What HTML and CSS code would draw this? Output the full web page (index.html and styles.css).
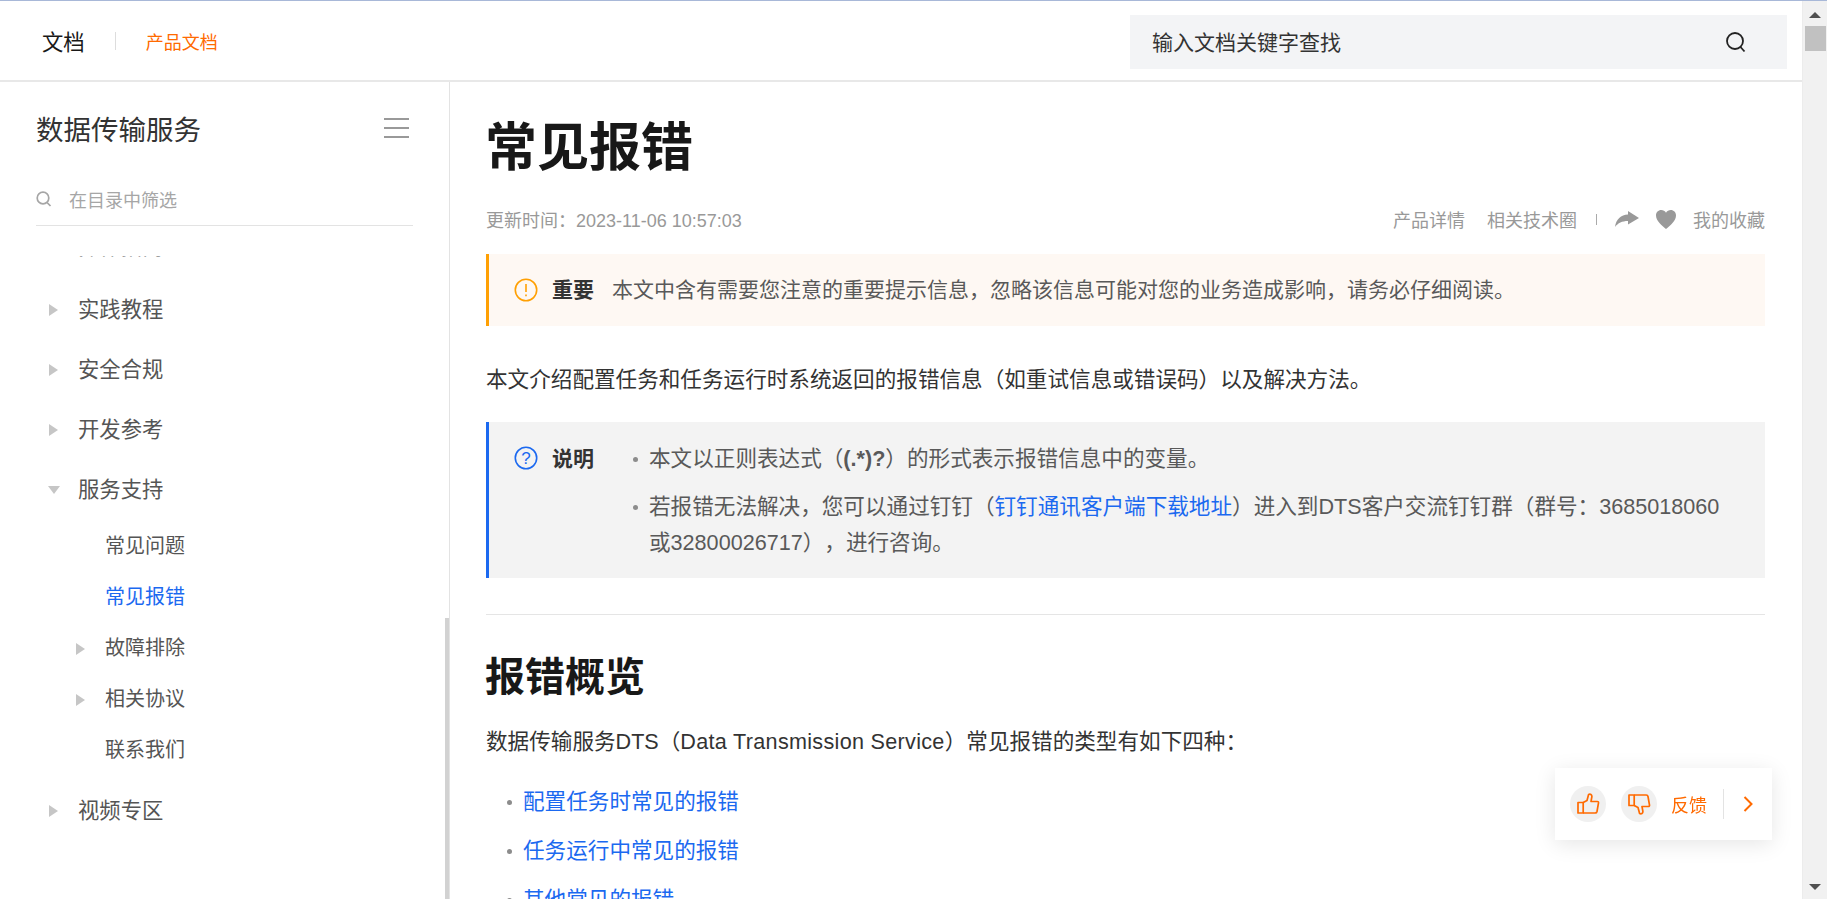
FILE: index.html
```html
<!DOCTYPE html>
<html lang="zh-CN">
<head>
    <meta charset="UTF-8">
    <meta name="viewport" content="width=device-width, initial-scale=1.0">
    <title>常见报错</title>
    <link rel="stylesheet" href="styles.css">
</head>
<body>
    <div class="page">
        <header class="topbar">
            <div class="crumbs">
                <span class="crumb-root">文档</span>
                <span class="crumb-sep"></span>
                <span class="crumb-link">产品文档</span>
            </div>
            <div class="search">
                <span>输入文档关键字查找</span>
                <svg class="search-icon" viewBox="0 0 22 22"><circle cx="10" cy="10" r="8" /><path d="M15.5 16l4 4.5" /></svg>
            </div>
        </header>

        <div class="columns">
            <aside class="sidebar">
                <div class="side-head">
                    <span class="side-title">数据传输服务</span>
                    <span class="burger"><i></i><i></i><i></i></span>
                </div>
                <div class="filter">
                    <svg class="filter-icon" viewBox="0 0 16 16"><circle cx="7" cy="7" r="5.8" /><path d="M11 11.5l3.5 3.5" /></svg>
                    <span>在目录中筛选</span>
                </div>
                <nav class="tree">
                    <div class="tree-inner">
                        <div class="node"><span class="arrow"></span>操作指南</div>
                        <div class="node"><span class="arrow"></span>实践教程</div>
                        <div class="node"><span class="arrow"></span>安全合规</div>
                        <div class="node"><span class="arrow"></span>开发参考</div>
                        <div class="node"><span class="arrow down"></span>服务支持</div>
                        <div class="subnodes">
                            <div class="sub">常见问题</div>
                            <div class="sub active">常见报错</div>
                            <div class="sub"><span class="arrow"></span>故障排除</div>
                            <div class="sub"><span class="arrow"></span>相关协议</div>
                            <div class="sub">联系我们</div>
                        </div>
                        <div class="node"><span class="arrow"></span>视频专区</div>
                    </div>
                </nav>
                <div class="side-scroll"></div>
            </aside>

            <main class="content">
                <h1>常见报错</h1>
                <div class="meta">
                    <span class="updated">更新时间：2023-11-06 10:57:03</span>
                    <div class="meta-links">
                        <span>产品详情</span>
                        <span>相关技术圈</span>
                        <span class="meta-sep"></span>
                        <svg class="share" viewBox="0 0 24 16"><path d="M13 0l11 7-11 6.500V10C7 10 3 12 0 16 1 8 6 3.800 13 3.400z" /></svg>
                        <svg class="heart" viewBox="0 0 20 19"><path d="M10 19C6 15.5 0 11 0 5.5 0 2.300 2.300 0 5.200 0 7.200 0 9 1 10 2.800 11 1 12.800 0 14.800 0 17.700 0 20 2.300 20 5.500 20 11 14 15.500 10 19z" /></svg>
                        <span class="fav">我的收藏</span>
                    </div>
                </div>

                <div class="notice important">
                    <svg class="notice-icon" viewBox="0 0 24 24"><circle cx="12" cy="12" r="10.700" /><path d="M12 6v8" /><path d="M12 16.500v1.800" /></svg>
                    <strong>重要</strong>
                    <span class="important-text">本文中含有需要您注意的重要提示信息，忽略该信息可能对您的业务造成影响，请务必仔细阅读。</span>
                </div>

                <p class="intro">本文介绍配置任务和任务运行时系统返回的报错信息（如重试信息或错误码）以及解决方法。</p>

                <div class="notice note">
                    <svg class="notice-icon" viewBox="0 0 24 24"><circle cx="12" cy="12" r="10.700" /><text x="12" y="18" text-anchor="middle">?</text></svg>
                    <strong>说明</strong>
                    <ul>
                        <li>本文以正则表达式（<b>(.*)?</b>）的形式表示报错信息中的变量。</li>
                        <li>若报错无法解决，您可以通过钉钉（<a href="#">钉钉通讯客户端下载地址</a>）进入到DTS客户交流钉钉群（群号：3685018060或32800026717），进行咨询。</li>
                    </ul>
                </div>

                <hr>

                <h2>报错概览</h2>
                <p class="lead">数据传输服务DTS（<span class="latin">Data Transmission Service</span>）常见报错的类型有如下四种：</p>
                <ul class="links">
                    <li><a href="#">配置任务时常见的报错</a></li>
                    <li><a href="#">任务运行中常见的报错</a></li>
                    <li><a href="#">其他常见的报错</a></li>
                </ul>
            </main>
        </div>

        <div class="feedback">
            <span class="vote"><svg viewBox="0 0 24 24"><path d="M2 10.500h5.200V21H2z" /><path d="M7.200 10.500L11 8.500l1.600-6c1.700-.9 3.400.2 3.300 2.100L15 9.500h6.300c.8 0 1.300.6 1.200 1.400L21 19.500c-.2 1-.9 1.500-1.800 1.500H7.200" /></svg></span>
            <span class="vote"><svg viewBox="0 0 24 24"><g transform="matrix(1 0 0 -1 0 24)"><path d="M2 10.500h5.200V21H2z" /><path d="M7.200 10.500L11 8.500l1.600-6c1.700-.9 3.400.2 3.300 2.100L15 9.500h6.300c.8 0 1.300.6 1.200 1.400L21 19.500c-.2 1-.9 1.500-1.800 1.500H7.200" /></g></svg></span>
            <span class="feedback-label">反馈</span>
            <span class="feedback-sep"></span>
            <svg class="feedback-more" viewBox="0 0 10 16"><path d="M1.500 1l7 7-7 7" /></svg>
        </div>
    </div>

    <div class="scrollbar">
        <span class="scroll-up"></span>
        <span class="scroll-thumb"></span>
        <span class="scroll-down"></span>
    </div>
</body>
</html>
```

FILE: styles.css
```css
* {
    box-sizing: border-box;
}
html, body {
    height: 100%;
}
body {
    margin: 0;
    display: flex;
    height: 899px;
    overflow: hidden;
    border-top: 1px solid #a8b8d8;
    background: #fff;
    color: #333;
    font-family: "Liberation Sans", "Noto Sans CJK SC", sans-serif;
    font-size: 21.33px;
    text-spacing-trim: space-all;
}
.page {
    flex: 1;
    min-width: 0;
    display: flex;
    flex-direction: column;
}

/* top bar */
.topbar {
    flex: none;
    height: 81px;
    display: flex;
    align-items: center;
    justify-content: space-between;
    padding: 0 15px 0 42px;
    border-bottom: 2px solid #e8e8e8;
}
.crumbs {
    display: flex;
    align-items: center;
}
.crumb-root {
    color: #181818;
}
.crumb-sep {
    width: 1px;
    height: 18px;
    margin: 0 30px;
    background: #ddd;
}
.crumb-link {
    font-size: 18px;
    color: #ff6a00;
}
.search {
    width: 657px;
    height: 54px;
    margin-top: 3px;
    display: flex;
    align-items: center;
    justify-content: space-between;
    padding: 0 40px 0 22px;
    background: #f3f4f6;
    font-size: 21px;
    color: #333;
}
.search span {
    margin-top: -3px;
}
.search-icon {
    width: 22px;
    height: 22px;
    fill: none;
    stroke: #222;
    stroke-width: 1.8;
}

/* columns */
.columns {
    flex: 1;
    min-height: 0;
    display: flex;
}
.sidebar {
    position: relative;
    flex: none;
    width: 450px;
    display: flex;
    flex-direction: column;
    padding: 0 36px;
    border-right: 1px solid #e3e3e3;
}
.side-head {
    height: 92px;
    flex: none;
    display: flex;
    align-items: center;
    justify-content: space-between;
    padding-right: 4px;
}
.side-title {
    font-size: 27.500px;
    color: #333;
}
.burger {
    width: 25px;
    display: flex;
    flex-direction: column;
    gap: 6.500px;
}
.burger i {
    display: block;
    height: 2.500px;
    background: #999;
}
.filter {
    flex: none;
    height: 52px;
    display: flex;
    align-items: center;
    gap: 17px;
    padding-bottom: 2px;
    border-bottom: 1px solid #e3e3e3;
    font-size: 18px;
    color: #a6a6a6;
}
.filter-icon {
    width: 16px;
    height: 16px;
    fill: none;
    stroke: #a6a6a6;
    stroke-width: 1.700;
}
.tree {
    flex: 1;
    min-height: 0;
    margin-top: 30px;
    overflow: hidden;
    color: #555;
}
.tree-inner {
    margin-top: -36px;
}
.node {
    position: relative;
    height: 60px;
    line-height: 60px;
    padding-left: 42px;
}
.node:first-child {
    line-height: 54px;
}
.subnodes {
    padding: 1px 0 0;
    margin-bottom: 5px;
    font-size: 20px;
}
.sub {
    position: relative;
    height: 51px;
    line-height: 51px;
    padding-left: 69px;
}
.sub.active {
    color: #1b69f0;
}
.arrow {
    position: absolute;
    left: 13px;
    top: 50%;
    margin-top: -6px;
    border-left: 9px solid #c6c6c6;
    border-top: 6px solid transparent;
    border-bottom: 6px solid transparent;
}
.arrow.down {
    left: 12px;
    margin-top: -4px;
    border-top: 8px solid #c6c6c6;
    border-left: 6px solid transparent;
    border-right: 6px solid transparent;
    border-bottom: 0;
}
.sub .arrow {
    left: 40px;
}
.side-scroll {
    position: absolute;
    right: 0;
    top: 536px;
    bottom: 0;
    width: 4px;
    background: #d2d2d2;
}

/* article */
.content {
    flex: 1;
    min-width: 0;
    overflow: hidden;
    padding: 36px 37px 0 36px;
    font-size: 21.6px;
    color: #333;
}
h1 {
    margin: 0 -1px;
    font-size: 52px;
    line-height: 60px;
    font-weight: 700;
    color: #181818;
}
h2 {
    margin: 37px -1px 0;
    font-size: 40px;
    line-height: 50px;
    font-weight: 700;
    color: #181818;
}
.meta {
    margin-top: 29px;
    height: 24px;
    display: flex;
    align-items: center;
    justify-content: space-between;
    font-size: 18px;
    color: #999;
}
.updated {
    font-size: 18px;
}
.meta-links {
    display: flex;
    align-items: center;
}
.meta-links span + span {
    margin-left: 22px;
}
.meta-links .meta-sep {
    width: 1px;
    height: 11px;
    margin-left: 19px;
    background: #aaa;
}
.share {
    width: 24px;
    height: 16px;
    margin-left: 18px;
    fill: #999;
}
.heart {
    width: 20px;
    height: 19px;
    margin-left: 17px;
    fill: #999;
}
.meta-links .fav {
    margin-left: 17px;
}
.notice {
    display: flex;
    align-items: flex-start;
    padding: 18px 0 18px 25px;
    border-left: 3px solid;
    line-height: 36px;
    color: #595959;
}
.notice strong {
    flex: none;
    font-size: 21px;
    color: #333;
    font-weight: 700;
}
.notice-icon {
    flex: none;
    width: 24px;
    height: 24px;
    margin: 6px 14px 0 0;
    fill: none;
    stroke-width: 1.600;
}
.important {
    margin-top: 23px;
    border-color: #ffa003;
    background: #fef8f3;
}
.important .notice-icon {
    stroke: #ffa003;
}
.important-text {
    margin-left: 18px;
    font-size: 21px;
}
.note {
    margin-top: 24px;
    padding-top: 19px;
    padding-bottom: 17px;
    border-color: #1b69f0;
    background: #f3f3f3;
}
.note .notice-icon {
    margin-top: 5px;
    stroke: #1b69f0;
}
.note .notice-icon text {
    font-size: 17px;
    fill: #1b69f0;
    stroke: none;
}
.note ul {
    margin: 0;
    padding: 0 30px 0 55px;
    list-style: none;
}
.note li {
    position: relative;
}
.note li + li {
    margin-top: 12px;
}
.note li::before,
.links li::before {
    content: "";
    position: absolute;
    left: -16px;
    top: 16px;
    width: 5px;
    height: 5px;
    border-radius: 50%;
    background: #8c8c8c;
}
a {
    color: #1b69f0;
    text-decoration: none;
}
.intro {
    margin: 36px 0 0;
    line-height: 36px;
}
.lead {
    margin: 22px 0 0;
    line-height: 36px;
}
.latin {
    letter-spacing: 0.3px;
}
hr {
    margin: 36px 0 0;
    height: 1px;
    border: 0;
    background: #e5e5e5;
}
.links {
    margin: 24px 0 0;
    padding: 0 0 0 37px;
    list-style: none;
}
.links li {
    position: relative;
    line-height: 36px;
    margin-bottom: 13px;
}

/* floating feedback */
.feedback {
    position: fixed;
    left: 1555px;
    top: 768px;
    width: 217px;
    height: 72px;
    display: flex;
    align-items: center;
    padding-left: 15px;
    background: #fff;
    box-shadow: 0 4px 20px rgba(0, 0, 0, 0.1);
    color: #ff6a00;
}
.vote {
    width: 36px;
    height: 36px;
    margin-right: 15px;
    display: flex;
    align-items: center;
    justify-content: center;
    border-radius: 50%;
    background: #f0f0f0;
}
.vote svg {
    width: 24px;
    height: 24px;
    fill: none;
    stroke: #ff6a00;
    stroke-width: 1.700;
    stroke-linejoin: round;
}
.feedback-label {
    font-size: 18px;
    margin-left: -1px;
}
.feedback-sep {
    width: 1px;
    height: 30px;
    margin: 0 19px 0 16px;
    background: #e3e3e3;
}
.feedback-more {
    width: 10px;
    height: 16px;
    fill: none;
    stroke: #ff6a00;
    stroke-width: 2;
}

/* window scrollbar */
.scrollbar {
    flex: none;
    width: 25px;
    display: flex;
    flex-direction: column;
    align-items: center;
    background: #f1f1f1;
    border-left: 1px solid #ececec;
}
.scroll-up {
    margin-top: 11px;
    border-left: 6px solid transparent;
    border-right: 6px solid transparent;
    border-bottom: 6px solid #505050;
}
.scroll-thumb {
    width: 21px;
    height: 25px;
    margin-top: 8px;
    background: #c1c1c1;
}
.scroll-down {
    margin-top: auto;
    margin-bottom: 9px;
    border-left: 6px solid transparent;
    border-right: 6px solid transparent;
    border-top: 6px solid #505050;
}
```
